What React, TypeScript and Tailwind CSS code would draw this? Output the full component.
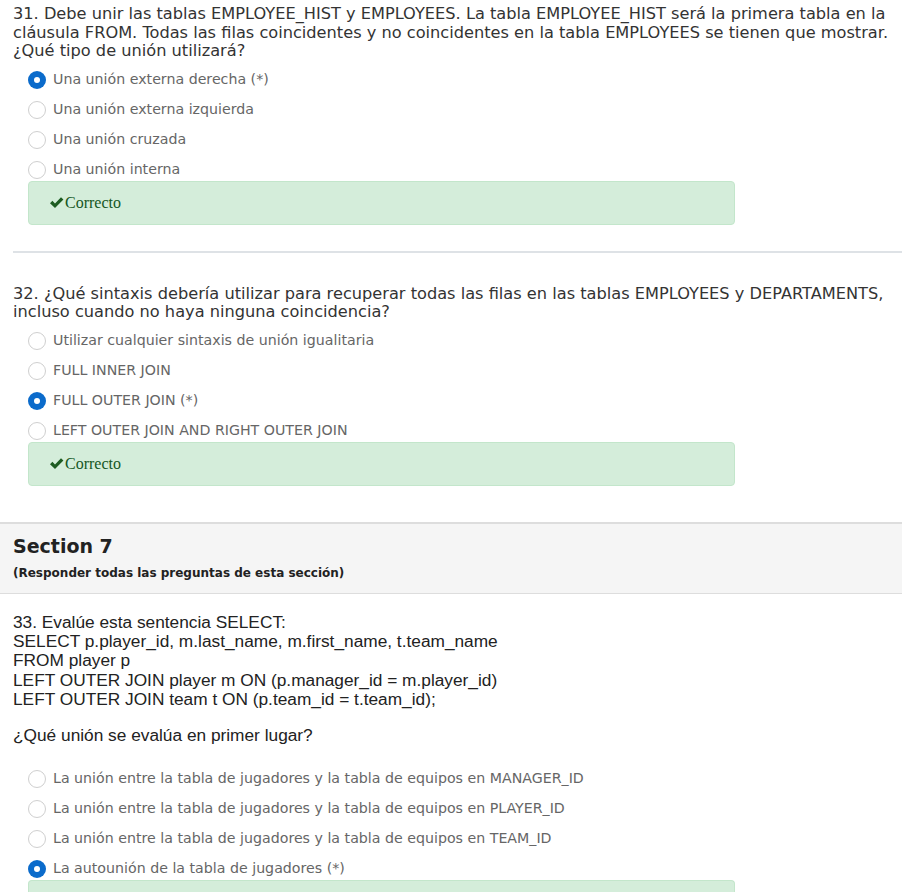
import type { ReactNode } from "react";

const verdana = { fontFamily: '"DejaVu Sans", Verdana, sans-serif' };

type Option = { text: string; checked?: boolean };

function Radio({ checked }: { checked?: boolean }) {
    if (checked) {
        return (
            <span className="flex h-[18px] w-[18px] shrink-0 items-center justify-center rounded-full bg-[#0b6bcb]">
                <span className="h-[6px] w-[6px] rounded-full bg-white" />
            </span>
        );
    }
    return <span className="h-[18px] w-[18px] shrink-0 rounded-full border border-[#cfcfcf] bg-white" />;
}

function Options({ items }: { items: Option[] }) {
    return (
        <div className="flex flex-col gap-2 pl-[15px]">
            {items.map(o => (
                <label key={o.text} className="flex h-[22px] items-center gap-[7px]">
                    <Radio checked={o.checked} />
                    <span className="text-[14.2px] text-[#666]" style={verdana}>
                        {o.text}
                    </span>
                </label>
            ))}
        </div>
    );
}

function Correct({ tall }: { tall?: boolean }) {
    return (
        <div
            className={
                "ml-[15px] w-[707px] rounded-[4px] border border-[#c3e6cb] bg-[#d4edda] " +
                (tall ? "h-[44px]" : "h-[20px] rounded-b-none border-b-0")
            }
        >
            {tall && (
                <div className="flex h-full items-center pl-[20px] text-[16px] text-[#155724]" style={{ fontFamily: '"Liberation Serif", "Times New Roman", serif' }}>
                    <svg width="15" height="13" viewBox="0 0 15 13" className="mr-[1px]">
                        <path d="M1 7.2 L3.4 4.8 L6 7.4 L12 1.2 L14.4 3.6 L6 12 Z" fill="#1d5c22" />
                    </svg>
                    Correcto
                </div>
            )}
        </div>
    );
}

function Question({ children }: { children: ReactNode }) {
    return (
        <div className="px-[13px] text-[16.2px] leading-[18.5px] text-[#333]" style={verdana}>
            {children}
        </div>
    );
}

export default function App() {
    return (
        <div className="min-h-[892px] w-[902px] overflow-hidden bg-white">
            <div className="pt-[5px]">
                <Question>
                    31. Debe unir las tablas EMPLOYEE_HIST y EMPLOYEES. La tabla EMPLOYEE_HIST será la primera tabla en la
                    <br />
                    cláusula FROM. Todas las filas coincidentes y no coincidentes en la tabla EMPLOYEES se tienen que mostrar.
                    <br />
                    ¿Qué tipo de unión utilizará?
                </Question>
                <div className="mt-[8px] pl-[13px]">
                    <Options
                        items={[
                            { text: "Una unión externa derecha (*)", checked: true },
                            { text: "Una unión externa izquierda" },
                            { text: "Una unión cruzada" },
                            { text: "Una unión interna" },
                        ]}
                    />
                    <Correct tall />
                </div>
            </div>

            <div className="ml-[13px] mt-[26px] h-[2px] bg-[#dee2e6]" />

            <div className="pt-[32px]">
                <Question>
                    32. ¿Qué sintaxis debería utilizar para recuperar todas las filas en las tablas EMPLOYEES y DEPARTAMENTS,
                    <br />
                    incluso cuando no haya ninguna coincidencia?
                </Question>
                <div className="mt-[8px] pl-[13px]">
                    <Options
                        items={[
                            { text: "Utilizar cualquier sintaxis de unión igualitaria" },
                            { text: "FULL INNER JOIN" },
                            { text: "FULL OUTER JOIN (*)", checked: true },
                            { text: "LEFT OUTER JOIN AND RIGHT OUTER JOIN" },
                        ]}
                    />
                    <Correct tall />
                </div>
            </div>

            <div className="mt-[36px] border-t-2 border-b border-[#dddddd] bg-[#f5f5f5] px-[13px] pb-[13px] pt-[11px]" style={verdana}>
                <div className="text-[19px] font-bold leading-[22px] text-[#222]">Section 7</div>
                <div className="mt-[9px] text-[12px] font-bold leading-[14px] text-[#222]">
                    (Responder todas las preguntas de esta sección)
                </div>
            </div>

            <div className="pt-[19px]">
                <div className="px-[13px] text-[17.3px] leading-[19.4px] text-[#222]" style={{ fontFamily: '"Liberation Sans", Arial, sans-serif' }}>
                    33. Evalúe esta sentencia SELECT:
                    <br />
                    SELECT p.player_id, m.last_name, m.first_name, t.team_name
                    <br />
                    FROM player p
                    <br />
                    LEFT OUTER JOIN player m ON (p.manager_id = m.player_id)
                    <br />
                    LEFT OUTER JOIN team t ON (p.team_id = t.team_id);
                    <div className="h-[16px]" />
                    ¿Qué unión se evalúa en primer lugar?
                </div>
                <div className="mt-[23px] pl-[13px]">
                    <Options
                        items={[
                            { text: "La unión entre la tabla de jugadores y la tabla de equipos en MANAGER_ID" },
                            { text: "La unión entre la tabla de jugadores y la tabla de equipos en PLAYER_ID" },
                            { text: "La unión entre la tabla de jugadores y la tabla de equipos en TEAM_ID" },
                            { text: "La autounión de la tabla de jugadores (*)", checked: true },
                        ]}
                    />
                    <Correct />
                </div>
            </div>
        </div>
    );
}
